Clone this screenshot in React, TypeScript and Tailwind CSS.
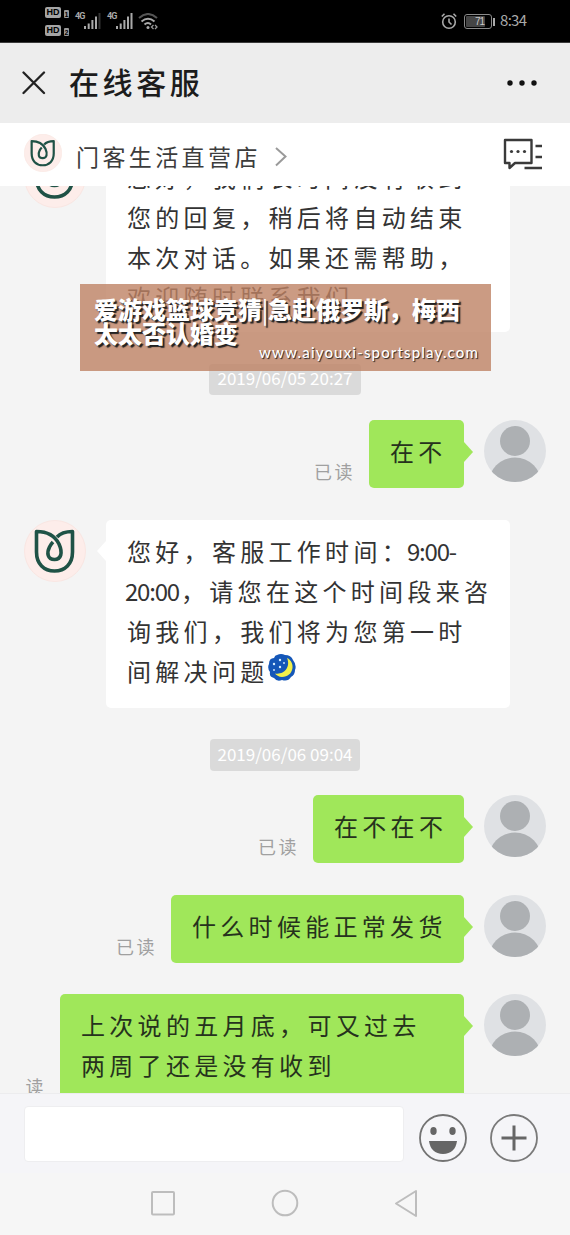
import type { ReactNode } from "react";

const CJK = "font-['Noto_Sans_CJK_SC',sans-serif]";

function TulipLogo({ className }: { className: string }) {
  return (
    <svg viewBox="0 0 62 62" className={className} fill="none">
      <circle cx="31" cy="31" r="30.5" fill="#fdedea" stroke="#f9e6e2" />
      <path
        d="M33 17 C37 12.500 43 11.500 48.500 11.500 V32 C48.500 44 41 51 30.500 51 C20 51 12.500 44 12.500 32 V11.500 C24 11.500 31 16 35 24 C39 33 37 39.500 30.500 39.500 C23.500 39.500 22.500 33 25.500 27 C26.500 25 27.500 23.500 29 22"
        stroke="#1f5246"
        strokeWidth="3.6"
        strokeLinejoin="round"
      />
    </svg>
  );
}

function UserAvatar() {
  return (
    <svg viewBox="0 0 62 62" className="ml-5 size-[62px] shrink-0">
      <clipPath id="avatar-disc">
        <circle cx="31" cy="31" r="31" />
      </clipPath>
      <circle cx="31" cy="31" r="31" fill="#dfe1e4" />
      <g clipPath="url(#avatar-disc)" fill="#adb0b3">
        <circle cx="31" cy="21" r="15" />
        <circle cx="31" cy="64" r="26.500" />
      </g>
    </svg>
  );
}

function MoonEmoji() {
  return (
    <svg viewBox="0 0 28 28" className="mt-[2px] size-7 shrink-0">
      <path
        d="M9 1 Q13 -1 17 1 Q23 1 25 6 Q29 11 27 16 Q27 21 23 23 Q20 28 14 26 Q9 28 6 24 Q1 23 2 18 Q-1 14 1 10 Q1 4 6 4 Q7 1 9 1Z"
        fill="#1557b8"
      />
      <path d="M19 4 C28 8 26 23 14 23 C11 23 8 21 7 19.500 C16 21 23 13 19 4Z" fill="#f2f04a" />
      <g fill="#d9efff">
        <circle cx="6" cy="10" r="1.200" />
        <circle cx="12" cy="6" r="1.200" />
        <circle cx="12" cy="13" r="1.200" />
        <circle cx="6" cy="16" r="0.900" />
        <circle cx="16" cy="9" r="0.900" />
      </g>
    </svg>
  );
}

function Signal({ faded }: { faded?: boolean }) {
  return (
    <svg viewBox="0 0 17 17" className="mt-[13px] size-[17px] shrink-0" fill="#a9a9a9">
      <rect x="0" y="13" width="2" height="3" />
      <rect x="3.700" y="10.500" width="2" height="5.500" />
      <rect x="7.400" y="7" width="2" height="9" />
      <rect x="11" y="3.500" width="2" height="12.500" />
      <rect x="14.500" y="0" width="2" height="16" fill={faded ? "#333333" : "#a9a9a9"} />
    </svg>
  );
}

function HdBadge({ sim }: { sim: string }) {
  return (
    <div className="flex h-[11px] items-center">
      <span className="flex h-[11px] w-4 items-center justify-center rounded-[2px] bg-[#a5a5a5] font-['Liberation_Sans',sans-serif] text-[9px] leading-none font-bold text-black">
        HD
      </span>
      <span className="mt-[3px] ml-[3px] flex h-2 w-[5px] items-center justify-center rounded-[1px] bg-[#999999] font-['Liberation_Sans',sans-serif] text-[7px] leading-none font-bold text-black">
        {sim}
      </span>
    </div>
  );
}

function StatusBar() {
  return (
    <div className="flex h-[43px] shrink-0 items-start border-b border-[#3b3b3b] bg-black pl-[45px] text-[#a9a9a9]">
      <div className="flex w-[30px] flex-col gap-[7px] pt-[7px]">
        <HdBadge sim="1" />
        <HdBadge sim="2" />
      </div>
      <span className="mt-[12px] w-[9px] font-['Liberation_Sans_Narrow','Roboto',sans-serif] text-[9px] leading-[9px] font-bold tracking-[-0.9px]">4G</span>
      <Signal faded />
      <span className="mt-[12px] ml-[6px] w-[9px] font-['Liberation_Sans_Narrow','Roboto',sans-serif] text-[9px] leading-[9px] font-bold tracking-[-0.9px]">4G</span>
      <Signal />
      <svg viewBox="0 0 20 17" className="mt-[13px] ml-[5px] h-[17px] w-5" fill="none" strokeWidth="2">
        <path d="M1 5 Q10 -3 19 5" stroke="#555555" />
        <path d="M3.500 8.500 Q10 3 16.500 8.500" stroke="#a9a9a9" />
        <path d="M6.500 11.500 Q10 8.500 13 11.500" stroke="#a9a9a9" />
        <circle cx="10" cy="14.500" r="1.500" fill="#a9a9a9" />
        <path d="M15.500 12 L13.500 14 L15.500 16 M17 12 L19 14 L17 16" stroke="#999999" strokeWidth="1.300" />
      </svg>
      <div className="ml-auto flex items-start pr-[43px]">
        <svg viewBox="0 0 16 17" className="mt-[13px] h-[17px] w-4" fill="none" stroke="#a9a9a9" strokeWidth="1.600">
          <circle cx="8" cy="9" r="6.300" />
          <path d="M8 5.500 V9 L10.500 11.500 M0.800 3.500 L3.500 0.800 M15.200 3.500 L12.500 0.800" />
        </svg>
        <div className="mt-[14px] ml-[7px] flex h-[15px] w-7 rounded-[3px] border border-[#8a8a8a] p-px">
          <div className="flex w-[19px] items-center justify-end rounded-[1px] bg-[#454545] pr-px font-['Liberation_Sans',sans-serif] text-[10px] leading-none tracking-[-1px] text-[#c8c8c8]">
            71
          </div>
        </div>
        <div className="mt-[18px] ml-px h-2 w-[2px] bg-[#a9a9a9]" />
        <span className={`mt-[10px] ml-[5px] w-[27px] text-[15px] leading-5 tracking-[-0.7px] ${CJK}`}>8:34</span>
      </div>
    </div>
  );
}

function Line({ children }: { children: ReactNode }) {
  return <div className="flex h-10 items-center whitespace-nowrap">{children}</div>;
}

function ServiceMessage({ children, className, bubbleClass = "pt-[11px]", logoClass = "" }: { children: ReactNode; className: string; bubbleClass?: string; logoClass?: string }) {
  return (
    <div className={`flex shrink-0 items-start pl-6 ${className}`}>
      <TulipLogo className={`size-[62px] shrink-0 ${logoClass}`} />
      <svg viewBox="0 0 9 20" className="mt-[21px] ml-[11px] h-5 w-[9px] shrink-0">
        <path d="M9 0 V20 L0 10Z" fill="#ffffff" />
      </svg>
      <div className={`h-[188px] w-[404px] rounded-[5px] bg-white pl-[21px] text-[24px] tracking-[4.3px] text-[#333333] ${bubbleClass}`}>
        {children}
      </div>
    </div>
  );
}

function UserMessage({ lines, width, height, read = "已读" }: { lines: string[]; width: string; height: string; read?: string }) {
  return (
    <div className="flex shrink-0 items-start justify-end pr-6">
      <div className={`flex items-end ${height}`}>
        <span className="mr-[14px] mb-[4px] text-[18px] leading-[26px] tracking-[2.5px] text-[#a0a0a0]">{read}</span>
        <div className={`h-full rounded-[5px] bg-[#a0e75a] pt-[11px] pl-[21px] text-[24px] tracking-[4.3px] text-[#26321d] ${width}`}>
          {lines.map((line) => (
            <Line key={line}>{line}</Line>
          ))}
        </div>
      </div>
      <div className="relative w-0">
        <svg viewBox="0 0 9 20" className="absolute top-[22px] left-0 h-5 w-[9px]">
          <path d="M0 0 V20 L9 10Z" fill="#a0e75a" />
        </svg>
      </div>
      <UserAvatar />
    </div>
  );
}

function DatePill({ children, className }: { children: string; className: string }) {
  return (
    <div className={`flex shrink-0 items-center justify-center self-center rounded-[4px] bg-[#dadada] pb-[3px] text-[17px] leading-6 whitespace-nowrap text-white ${className}`}>
      {children}
    </div>
  );
}

function Banner() {
  return (
    <div className="absolute top-[284px] left-[80px] h-[87px] w-[411px] bg-[rgba(190,130,100,0.8)] pt-[13px] pl-[14px] text-white">
      <div className="text-[24px] leading-6 font-black whitespace-nowrap [text-shadow:2px_2px_1px_#222222]">
        <div className="flex h-6">
          <span>爱游戏篮球竞猜</span>
          <span className="flex w-[6px] justify-center font-normal">|</span>
          <span>急赴俄罗斯，梅西</span>
        </div>
        <div className="h-6">太太否认婚变</div>
      </div>
      <div className="-mt-[3px] pr-[12px] text-right font-['Lato',sans-serif] text-[15px] leading-5 font-medium tracking-[1.15px] whitespace-nowrap [text-shadow:1px_1px_1px_#222222]">
        www.aiyouxi-sportsplay.com
      </div>
    </div>
  );
}

export default function App() {
  return (
    <div className={`relative flex h-[1235px] w-[570px] flex-col overflow-hidden bg-[#f4f4f4] ${CJK}`}>
      <StatusBar />
      <header className="flex h-20 shrink-0 items-center bg-[#ededed] pr-[33px] pl-[22px]">
        <svg viewBox="0 0 24 24" className="size-6" stroke="#222222" strokeWidth="2.300" strokeLinecap="round">
          <path d="M1.500 1.500 L22 22 M22 1.500 L1.500 22" />
        </svg>
        <h1 className="mb-[5px] ml-[23px] text-[30px] leading-10 font-medium tracking-[3.6px] text-[#1c1c1c]">在线客服</h1>
        <svg viewBox="0 0 30 6" className="ml-auto h-[6px] w-[30px]" fill="#111111">
          <circle cx="3" cy="3" r="2.700" />
          <circle cx="15" cy="3" r="2.700" />
          <circle cx="27" cy="3" r="2.700" />
        </svg>
      </header>
      <div className="flex h-[63px] shrink-0 items-start bg-white pr-[27px] pl-6">
        <TulipLogo className="mt-[11px] size-[38px]" />
        <span className="mt-[16px] ml-[14px] text-[23px] leading-[34px] tracking-[3.4px] text-[#3c3c3c]">门客生活直营店</span>
        <svg viewBox="0 0 12 20" className="mt-6 ml-[14px] h-5 w-3" fill="none" stroke="#9a9a9a" strokeWidth="2">
          <path d="M1 1 L10.500 9.500 L1 18.500" />
        </svg>
        <svg viewBox="0 0 40 32" className="mt-[15px] ml-auto h-8 w-10" fill="none" stroke="#3a3a3a" strokeWidth="2.400">
          <path d="M2 2 H28.500 V25 H12 L6.500 30 V25 H2Z" strokeLinejoin="round" />
          <path d="M32.500 8 H39 M32.500 19 H39 M21.500 30 H39" />
          <g fill="#3a3a3a" stroke="none">
            <circle cx="8.500" cy="13.500" r="1.600" />
            <circle cx="15" cy="13.500" r="1.600" />
            <circle cx="21.500" cy="13.500" r="1.600" />
          </g>
        </svg>
      </div>

      <main className="flex h-[907px] shrink-0 flex-col overflow-hidden">
        <ServiceMessage className="-mt-[42px]" bubbleClass="pt-[13px]" logoClass="mt-[2px]">
          <Line>您好，我们长时间没有收到</Line>
          <Line>您的回复，稍后将自动结束</Line>
          <Line>本次对话。如果还需帮助，</Line>
          <Line>欢迎随时联系我们</Line>
        </ServiceMessage>
        <DatePill className="mt-[32px] h-[31px] w-[152px]">2019/06/05 20:27</DatePill>
        <div className="h-[25px] shrink-0" />
        <UserMessage lines={["在不"]} width="w-[95px]" height="h-[68px]" />
        <ServiceMessage className="mt-[32px]">
          <Line>
            您好，客服工作时间：<span className="-ml-[3px] tracking-[-1.2px]">9:00-</span>
          </Line>
          <Line>
            <span className="-ml-[2px] w-14 tracking-[-1.2px]">20:00</span>，请您在这个时间段来咨
          </Line>
          <Line>询我们，我们将为您第一时</Line>
          <Line>
            <span className="w-[141px]">间解决问题</span>
            <div className="-mt-2">
              <MoonEmoji />
            </div>
          </Line>
        </ServiceMessage>
        <DatePill className="mt-[31px] h-8 w-[150px]">2019/06/06 09:04</DatePill>
        <div className="mt-6 flex shrink-0 flex-col gap-[31.5px]">
          <UserMessage lines={["在不在不"]} width="w-[151px]" height="h-[68px]" />
          <UserMessage lines={["什么时候能正常发货"]} width="w-[293px]" height="h-[68px]" />
          <UserMessage lines={["上次说的五月底，可又过去", "两周了还是没有收到"]} width="w-[404px]" height="h-[109px]" read="读" />
        </div>
      </main>

      <footer className="flex h-20 shrink-0 items-start border-t border-[#ececee] bg-[#f5f5f8] pl-6">
        <div className="mt-3 h-[56px] w-[380px] rounded-[4px] border border-[#eeeef0] bg-white" />
        <svg viewBox="0 0 48 48" className="mt-5 ml-[15px] size-12" fill="#666666">
          <circle cx="24" cy="24" r="23" fill="none" stroke="#737373" strokeWidth="1.800" />
          <ellipse cx="14.500" cy="17" rx="3.200" ry="4" />
          <ellipse cx="33.500" cy="17" rx="3.200" ry="4" />
          <path d="M10 27 H38 C37 35 32 40 24 40 C16 40 11 35 10 27Z" />
        </svg>
        <svg viewBox="0 0 48 48" className="mt-5 ml-[23px] size-12" fill="none">
          <circle cx="24" cy="24" r="23" stroke="#7a7a7a" strokeWidth="1.800" />
          <path d="M24 11.500 V36.500 M11.500 24 H36.500" stroke="#666666" strokeWidth="3" />
        </svg>
      </footer>
      <nav className="flex h-[62px] shrink-0 items-start bg-[#f6f6f6] pt-4 pl-[150px]">
        <svg viewBox="0 0 268 28" className="h-7 w-[268px]" fill="none" stroke="#bdbdbd" strokeWidth="2">
          <rect x="2" y="3" width="22" height="22.500" rx="1" />
          <circle cx="135" cy="14" r="12.300" />
          <path d="M266 2 V27 L246 14.500Z" strokeLinejoin="round" />
        </svg>
      </nav>
      <Banner />
    </div>
  );
}
